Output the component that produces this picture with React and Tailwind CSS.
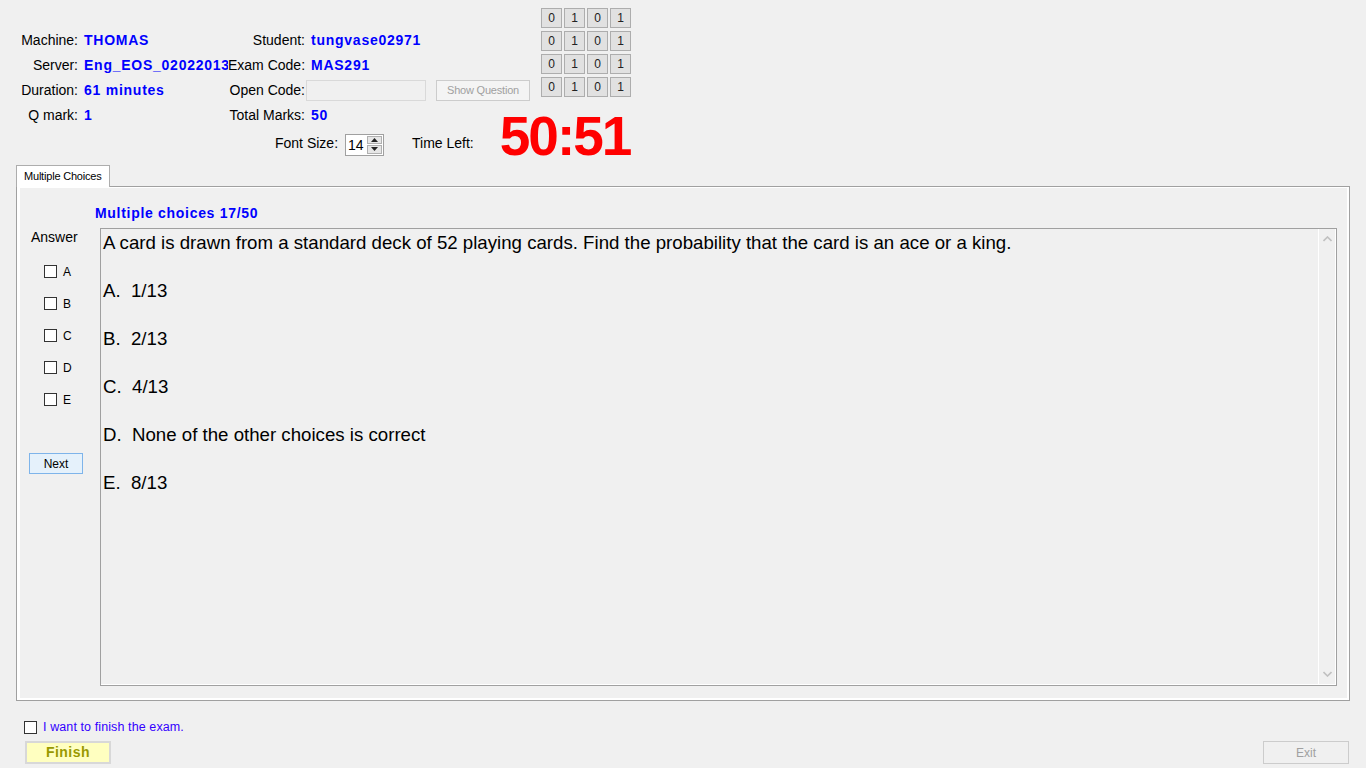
import React from 'react'

const FONT = { fontFamily: '"Liberation Sans", Arial, sans-serif' }

function Label({ children }) {
  return <div className="text-right text-[14px] text-black whitespace-nowrap">{children}</div>
}

function Value({ children }) {
  return (
    <div className="pl-[6px] text-[14px] font-bold text-[#0000ff] tracking-[0.75px] whitespace-nowrap overflow-hidden">
      {children}
    </div>
  )
}

function BitGrid() {
  const rows = [0, 1, 2, 3]
  const bits = ['0', '1', '0', '1']
  return (
    <div className="pt-[8px] flex flex-col gap-[3px]">
      {rows.map(r => (
        <div key={r} className="flex gap-[2px]">
          {bits.map((b, i) => (
            <div
              key={i}
              className="w-[21px] h-[20px] border border-[#adadad] bg-[#e1e1e1] flex items-center justify-center text-[12px] text-[#222]"
            >
              {b}
            </div>
          ))}
        </div>
      ))}
    </div>
  )
}

function Spinner() {
  return (
    <div className="mt-[5.5px] ml-[7px] w-[39px] h-[22px] border border-[#a0a0a0] bg-white flex">
      <div className="flex-1 pl-[2px] text-[14px] leading-[20px]">14</div>
      <div className="w-[15px] my-[1px] mr-[1px] flex flex-col gap-[1px]">
        <div className="flex-1 bg-[#e6e6e6] border border-[#b0b0b0] flex items-center justify-center">
          <svg width="7" height="4" viewBox="0 0 7 4"><path d="M0 4 L3.5 0 L7 4 Z" fill="#222" /></svg>
        </div>
        <div className="flex-1 bg-[#e6e6e6] border border-[#b0b0b0] flex items-center justify-center">
          <svg width="7" height="4" viewBox="0 0 7 4"><path d="M0 0 L3.5 4 L7 0 Z" fill="#222" /></svg>
        </div>
      </div>
    </div>
  )
}

function Header() {
  return (
    <div className="h-[165px]">
      <div className="flex items-start">
        <div className="w-[541px] pt-[28px]">
          <div className="grid grid-cols-[78px_150px_77px_auto] auto-rows-[25px] items-center">
            <Label>Machine:</Label>
            <Value>THOMAS</Value>
            <Label>Student:</Label>
            <Value>tungvase02971</Value>

            <Label>Server:</Label>
            <Value>Eng_EOS_02022013</Value>
            <Label>Exam Code:</Label>
            <Value>MAS291</Value>

            <Label>Duration:</Label>
            <Value>61 minutes</Value>
            <Label>Open Code:</Label>
            <div className="flex items-center">
              <div className="ml-[1px] w-[120px] h-[21px] border border-[#d9d9d9] bg-[#f0f0f0]" />
              <div className="ml-[10px] w-[94px] h-[21px] border border-[#cccccc] bg-[#f4f4f4] flex items-center justify-center text-[11px] tracking-[-0.2px] text-[#a0a0a0]">
                Show Question
              </div>
            </div>

            <Label>Q mark:</Label>
            <Value>1</Value>
            <Label>Total Marks:</Label>
            <Value>50</Value>
          </div>
        </div>
        <BitGrid />
      </div>
      <div className="flex items-start h-[30px]">
        <div className="ml-[275px] text-[14px] leading-[30px]">Font Size:</div>
        <Spinner />
        <div className="ml-[28px] text-[14px] leading-[30px]">Time Left:</div>
        <div className="ml-[26px] mt-[-19px] text-[55px] leading-none font-bold text-[#ff0000] tracking-[-2px]">
          50:51
        </div>
      </div>
    </div>
  )
}

function CheckBox() {
  return <div className="w-[13px] h-[13px] border border-[#333333] bg-white" />
}

function ScrollBar() {
  return (
    <div className="w-[17px] border-l border-white flex flex-col justify-between items-center py-[7px]">
      <svg width="9" height="6" viewBox="0 0 9 6">
        <path d="M0.5 5 L4.5 1 L8.5 5" stroke="#c0c0c0" strokeWidth="1.6" fill="none" />
      </svg>
      <svg width="9" height="6" viewBox="0 0 9 6">
        <path d="M0.5 1 L4.5 5 L8.5 1" stroke="#c0c0c0" strokeWidth="1.6" fill="none" />
      </svg>
    </div>
  )
}

function QuestionBox() {
  const lines = [
    'A card is drawn from a standard deck of 52 playing cards. Find the probability that the card is an ace or a king.',
    'A.  1/13',
    'B.  2/13',
    'C.  4/13',
    'D.  None of the other choices is correct',
    'E.  8/13',
  ]
  return (
    <div className="flex-1 border border-[#a0a0a0] flex">
      <div className="flex-1 flex border-r border-b border-white">
        <div className="flex-1 pl-[2px] pt-[2px] flex flex-col gap-[24px]">
          {lines.map((l, i) => (
            <div key={i} className="text-[18.67px] leading-[24px] text-black whitespace-pre">{l}</div>
          ))}
        </div>
        <ScrollBar />
      </div>
    </div>
  )
}

function TabPanel() {
  const choices = ['A', 'B', 'C', 'D', 'E']
  return (
    <div className="ml-[16px] w-[1334px]">
      <div className="relative z-10 -mb-px w-[94px] h-[22px] border border-b-0 border-[#adadad] bg-white flex items-center pl-[7px] text-[11px] tracking-[-0.2px]">
        Multiple Choices
      </div>
      <div className="h-[515px] border border-[#a0a0a0] bg-white pt-[1px] pl-[3px] pr-[2px] pb-[2px]">
        <div className="h-full bg-[#f0f0f0] flex flex-col pt-[15px] pb-[12px]">
          <div className="pl-[75px] h-[20px] leading-[20px] text-[14px] font-bold text-[#0000ff] tracking-[0.7px]">
            Multiple choices 17/50
          </div>
          <div className="mt-[5px] flex-1 flex pr-[10px]">
            <div className="w-[80px] flex flex-col">
              <div className="pl-[11px] h-[18px] leading-[18px] text-[14px]">Answer</div>
              <div className="mt-[9.5px] flex flex-col">
                {choices.map(c => (
                  <div key={c} className="h-[32px] flex items-center pl-[24px] gap-[6px]">
                    <CheckBox />
                    <span className="text-[12px]">{c}</span>
                  </div>
                ))}
              </div>
              <div className="mt-[37.5px] ml-[9px] w-[54px] h-[21px] border border-[#7eb4ea] bg-[#e5f1fb] flex items-center justify-center text-[12px]">
                Next
              </div>
            </div>
            <QuestionBox />
          </div>
        </div>
      </div>
    </div>
  )
}

function Footer() {
  return (
    <div>
      <div className="mt-[18.5px] h-[16px] flex items-center pl-[24px] gap-[6px]">
        <CheckBox />
        <span className="text-[12.5px] text-[#3300ff] tracking-[0.1px]">I want to finish the exam.</span>
      </div>
      <div className="mt-[5.5px] flex justify-between pl-[25px] pr-[17px]">
        <div className="w-[86px] h-[23px] border-2 border-[#d8d8d8] bg-[#ffffc0] flex items-center justify-center text-[14px] font-bold text-[#999900] tracking-[0.5px]">
          Finish
        </div>
        <div className="w-[86px] h-[23px] border border-[#cccccc] bg-[#f0f0f0] flex items-center justify-center text-[12px] text-[#a0a0a0]">
          Exit
        </div>
      </div>
    </div>
  )
}

export default function App() {
  return (
    <div className="w-[1366px] h-[768px] bg-[#f0f0f0] text-black overflow-hidden" style={FONT}>
      <Header />
      <TabPanel />
      <Footer />
    </div>
  )
}
